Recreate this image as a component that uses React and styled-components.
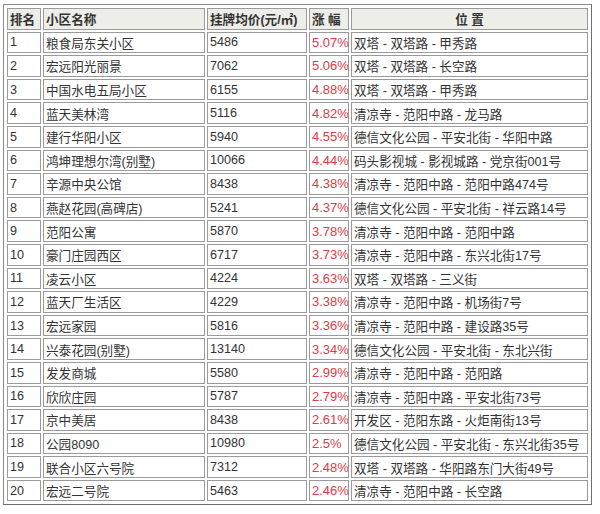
import React from 'react';
import styled, { createGlobalStyle } from 'styled-components';

const GlobalStyle = createGlobalStyle`
  body {
    margin: 0;
    background: #fff;
    font-family: "Liberation Sans", "Noto Sans CJK SC", sans-serif;
  }
`;

const rows = [
  [1, '粮食局东关小区', 5486, '5.07%', '双塔 - 双塔路 - 甲秀路'],
  [2, '宏远阳光丽景', 7062, '5.06%', '双塔 - 双塔路 - 长空路'],
  [3, '中国水电五局小区', 6155, '4.88%', '双塔 - 双塔路 - 甲秀路'],
  [4, '蓝天美林湾', 5116, '4.82%', '清凉寺 - 范阳中路 - 龙马路'],
  [5, '建行华阳小区', 5940, '4.55%', '德信文化公园 - 平安北街 - 华阳中路'],
  [6, '鸿坤理想尔湾(别墅)', 10066, '4.44%', '码头影视城 - 影视城路 - 党京街001号'],
  [7, '辛源中央公馆', 8438, '4.38%', '清凉寺 - 范阳中路 - 范阳中路474号'],
  [8, '燕赵花园(高碑店)', 5241, '4.37%', '德信文化公园 - 平安北街 - 祥云路14号'],
  [9, '范阳公寓', 5870, '3.78%', '清凉寺 - 范阳中路 - 范阳中路'],
  [10, '豪门庄园西区', 6717, '3.73%', '清凉寺 - 范阳中路 - 东兴北街17号'],
  [11, '凌云小区', 4224, '3.63%', '双塔 - 双塔路 - 三义街'],
  [12, '蓝天厂生活区', 4229, '3.38%', '清凉寺 - 范阳中路 - 机场街7号'],
  [13, '宏远家园', 5816, '3.36%', '清凉寺 - 范阳中路 - 建设路35号'],
  [14, '兴泰花园(别墅)', 13140, '3.34%', '德信文化公园 - 平安北街 - 东北兴街'],
  [15, '发发商城', 5580, '2.99%', '清凉寺 - 范阳中路 - 范阳路'],
  [16, '欣欣庄园', 5787, '2.79%', '清凉寺 - 范阳中路 - 平安北街73号'],
  [17, '京中美居', 8438, '2.61%', '开发区 - 范阳东路 - 火炬南街13号'],
  [18, '公园8090', 10980, '2.5%', '德信文化公园 - 平安北街 - 东兴北街35号'],
  [19, '联合小区六号院', 7312, '2.48%', '双塔 - 双塔路 - 华阳路东门大街49号'],
  [20, '宏远二号院', 5463, '2.46%', '清凉寺 - 范阳中路 - 长空路'],
];

const Page = styled.div`
  padding: 4px 3px;
`;

const Table = styled.table`
  width: 589px;
  table-layout: fixed;
  border-collapse: separate;
  border-spacing: 2px;
  border: 1px solid #8a8a8a;
  border-right-color: #6f6f6f;
  border-bottom-color: #6f6f6f;
  padding: 1px;
  font-size: 12.6px;
  color: #333;
`;

const Head = styled.th`
  height: 21.6px;
  box-sizing: border-box;
  padding: 0 2px;
  background: #eeeee8;
  border: 1px solid #9a9a9a;
  font-weight: bold;
  text-align: ${(p) => (p.$center ? 'center' : 'left')};
  white-space: nowrap;
  overflow: hidden;
`;

const Cell = styled.td`
  height: 21.6px;
  box-sizing: border-box;
  padding: 0 2px;
  border: 1px solid #9a9a9a;
  background: #fff;
  font-size: ${(p) => (p.$red ? '13px' : 'inherit')};
  color: ${(p) => (p.$red ? '#e03a48' : '#333')};
  white-space: nowrap;
  overflow: hidden;
`;

function App() {
  return (
    <Page>
      <GlobalStyle />
      <Table>
        <colgroup>
          <col style={{ width: 34 }} />
          <col style={{ width: 162 }} />
          <col style={{ width: 100 }} />
          <col style={{ width: 40 }} />
          <col />
        </colgroup>
        <thead>
          <tr>
            <Head>排名</Head>
            <Head>小区名称</Head>
            <Head>挂牌均价(元/㎡)</Head>
            <Head>涨 幅</Head>
            <Head $center>位 置</Head>
          </tr>
        </thead>
        <tbody>
          {rows.map(([rank, name, price, rise, place]) => (
            <tr key={rank}>
              <Cell>{rank}</Cell>
              <Cell>{name}</Cell>
              <Cell>{price}</Cell>
              <Cell $red>{rise}</Cell>
              <Cell>{place}</Cell>
            </tr>
          ))}
        </tbody>
      </Table>
    </Page>
  );
}

export default App;
